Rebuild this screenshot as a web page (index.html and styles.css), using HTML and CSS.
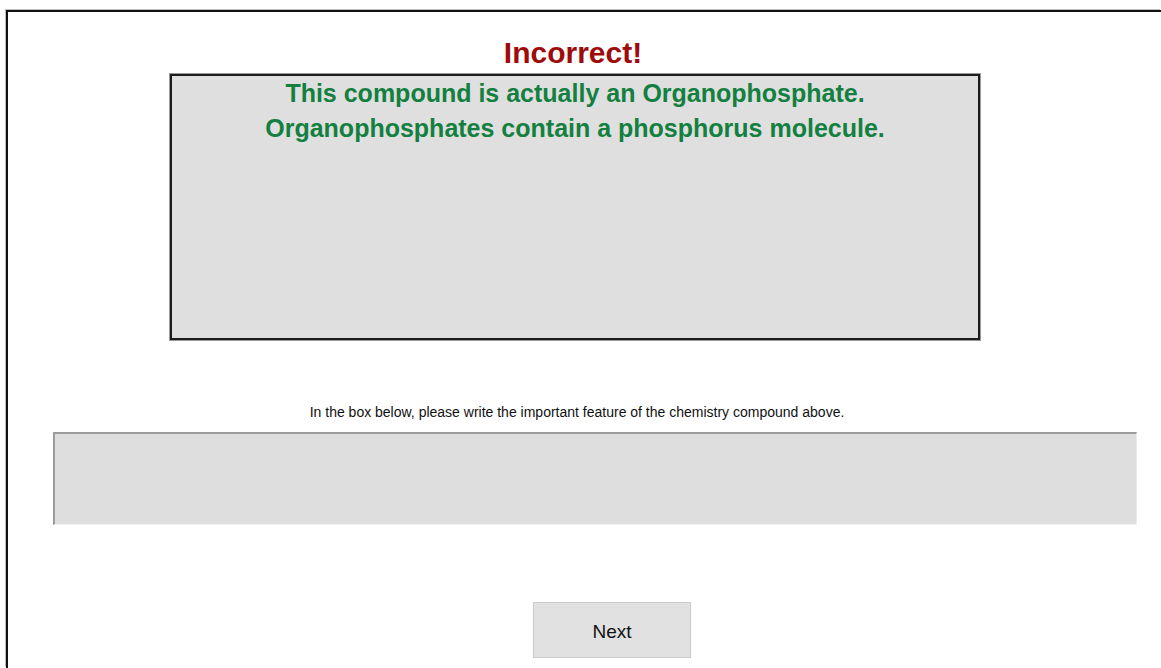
FILE: index.html
```html
<!DOCTYPE html>
<html lang="en">
<head>
<meta charset="utf-8">
<title>Quiz feedback</title>
<link rel="stylesheet" href="styles.css">
</head>
<body>
<div class="frame">
  <div class="column">
    <h1 class="verdict">Incorrect!</h1>
    <div class="feedback">
      <p class="feedback-line">This compound is actually an Organophosphate.</p>
      <p class="feedback-line">Organophosphates contain a phosphorus molecule.</p>
    </div>
    <p class="prompt">In the box below, please write the important feature of the chemistry compound above.</p>
    <textarea class="answer" aria-label="Answer"></textarea>
    <button class="next" type="button">Next</button>
  </div>
</div>
</body>
</html>
```

FILE: styles.css
```css
html, body {
  margin: 0;
  padding: 0;
  background: #ffffff;
  overflow: hidden;
  font-family: "Liberation Sans", Arial, sans-serif;
}

.frame {
  margin: 10px 0 0 6px;
  width: 1155px;
  height: 658px;
  border-top: 2px solid #111111;
  border-left: 2px solid #111111;
  box-shadow: -1px -1px 0 #bdbdbd;
  padding-top: 24px;
  box-sizing: border-box;
}

.column {
  width: 1138px;
  display: flex;
  flex-direction: column;
}

.verdict {
  margin: 0;
  align-self: center;
  padding-right: 8px;
  font-size: 30px;
  line-height: 34px;
  font-weight: bold;
  color: #9e0b0b;
}

.feedback {
  margin: 4px 0 0 162px;
  width: 810px;
  height: 266px;
  box-sizing: border-box;
  border: 2px solid #1c1c1c;
  box-shadow: 0 0 0 1px #9a9a9a;
  background: #dfdfdf;
  text-align: center;
}

.feedback-line {
  margin: 0;
  font-size: 25px;
  line-height: 35px;
  font-weight: bold;
  color: #13803f;
}

.prompt {
  margin: 64px 0 0 0;
  align-self: center;
  font-size: 14px;
  line-height: 16px;
  color: #111111;
}

.answer {
  display: block;
  margin: 12px 0 0 45px;
  width: 1084px;
  height: 93px;
  box-sizing: border-box;
  border-top: 2px solid #9c9c9c;
  border-left: 2px solid #9c9c9c;
  border-right: 1px solid #ececec;
  border-bottom: 1px solid #f0f0f0;
  background: #dedede;
  resize: none;
  outline: none;
  padding: 4px;
  font-family: "Liberation Sans", Arial, sans-serif;
  font-size: 14px;
}

.next {
  margin: 77px 0 0 525px;
  width: 158px;
  height: 56px;
  box-sizing: border-box;
  border: 1px solid #c9c9c9;
  background: #e1e1e1;
  color: #111111;
  font-family: "Liberation Sans", Arial, sans-serif;
  font-size: 19px;
  padding: 3px 0 0 0;
  cursor: pointer;
}
```
